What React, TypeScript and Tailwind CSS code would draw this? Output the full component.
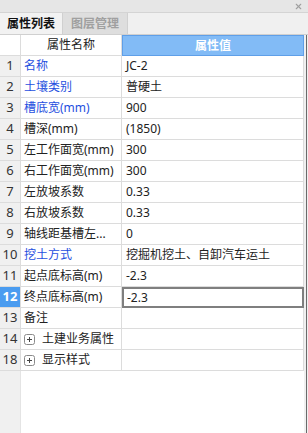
import { X } from "lucide-react";

type Row = {
  n: string;
  name: string;
  value?: string;
  blue?: boolean;
  group?: boolean;
  active?: boolean;
};

const rows: Row[] = [
  { n: "1", name: "名称", value: "JC-2", blue: true },
  { n: "2", name: "土壤类别", value: "普硬土", blue: true },
  { n: "3", name: "槽底宽(mm)", value: "900", blue: true },
  { n: "4", name: "槽深(mm)", value: "(1850)" },
  { n: "5", name: "左工作面宽(mm)", value: "300" },
  { n: "6", name: "右工作面宽(mm)", value: "300" },
  { n: "7", name: "左放坡系数", value: "0.33" },
  { n: "8", name: "右放坡系数", value: "0.33" },
  { n: "9", name: "轴线距基槽左...", value: "0" },
  { n: "10", name: "挖土方式", value: "挖掘机挖土、自卸汽车运土", blue: true },
  { n: "11", name: "起点底标高(m)", value: "-2.3" },
  { n: "12", name: "终点底标高(m)", value: "-2.3", active: true },
  { n: "13", name: "备注", value: "" },
  { n: "14", name: "土建业务属性", group: true },
  { n: "18", name: "显示样式", group: true },
];

function PlusBox() {
  return (
    <svg width="11" height="11" viewBox="0 0 11 11" className="shrink-0">
      <rect x="0.5" y="0.5" width="10" height="10" rx="2" fill="white" stroke="#8a8a8a" />
      <path d="M3 5.5h5M5.5 3v5" stroke="#444" strokeWidth="1" />
    </svg>
  );
}

export default function App() {
  return (
    <div
      className="w-[308px] h-[433px] overflow-hidden bg-white flex flex-col text-[12px] text-[#222]"
      style={{ fontFamily: '"Noto Sans", "Noto Sans CJK SC", sans-serif' }}
    >
      {/* title strip */}
      <div className="h-[13px] shrink-0 bg-[#e6e6e6] border-b border-[#d4d4d4] flex justify-end items-center pr-[5px]">
        <X className="w-[9px] h-[9px] text-[#a0a0a0]" strokeWidth={3} />
      </div>

      {/* tabs */}
      <div className="h-[22px] shrink-0 bg-[#f0f0f0] border-b border-[#d0d0d0] flex">
        <div className="w-[63px] flex items-center justify-center font-bold text-[#111] border-r border-[#d0d0d0] bg-[#f2f2f2]">
          属性列表
        </div>
        <div className="w-[65px] flex items-center justify-center font-bold text-[#a0a0a0] bg-[#dedede] border-r border-[#d0d0d0]">
          图层管理
        </div>
      </div>

      <div className="flex flex-1 min-h-0">
        <div className="w-[304px] flex flex-col">
          {/* header */}
          <div className="flex h-[21px] shrink-0">
            <div className="w-[21px] bg-white border-r border-b border-[#dcdcdc]" />
            <div className="w-[101px] flex items-center justify-center border-r border-b border-[#dcdcdc]">
              属性名称
            </div>
            <div className="w-[182px] flex items-center justify-center bg-[#82bbf6] border border-[#5f9fe8] text-white font-bold">
              属性值
            </div>
          </div>

          {rows.map((r) => (
            <div key={r.n} className="flex h-[21px] shrink-0">
              <div
                className={`w-[21px] flex items-center justify-center text-[13px] border-r border-b border-[#dcdcdc] ${
                  r.active ? "bg-[#4a9cf0] text-white font-bold" : "bg-[#f0f0f0] text-[#333]"
                }`}
              >
                {r.n}
              </div>
              {r.group ? (
                <div className="w-[101px] flex items-center gap-[7px] pl-[3px] border-r border-b border-[#dcdcdc]">
                  <PlusBox />
                  <span>{r.name}</span>
                </div>
              ) : (
                <div
                  className={`w-[101px] flex items-center pl-[3px] border-r border-b border-[#dcdcdc] whitespace-nowrap ${
                    r.blue ? "text-[#1f4fe0]" : ""
                  }`}
                >
                  {r.name}
                </div>
              )}
              {r.active ? (
                <div className="w-[182px] flex items-center pl-[3px] border-2 border-[#7f7f7f]">
                  {r.value}
                </div>
              ) : (
                <div className="w-[182px] flex items-center pl-[4px] border-r border-b border-[#dcdcdc] whitespace-nowrap">
                  {r.value}
                </div>
              )}
            </div>
          ))}

          {/* empty area */}
          <div className="flex flex-1">
            <div className="w-[21px] bg-[#f0f0f0] border-r border-[#e4e4e4]" />
            <div className="flex-1 bg-white" />
          </div>
        </div>

        {/* right edge */}
        <div className="w-[4px] bg-[#f0f0f0] flex justify-center">
          <div className="w-[1px] bg-[#6a6a6a]" />
        </div>
      </div>
    </div>
  );
}
